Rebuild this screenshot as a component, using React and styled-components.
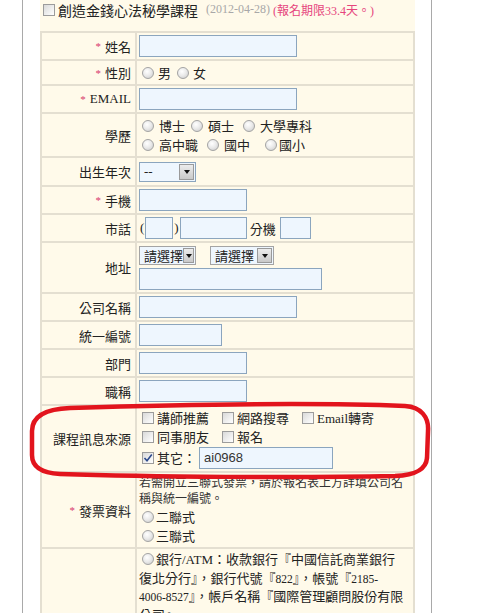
import React from "react";
import styled, { createGlobalStyle } from "styled-components";

const GlobalStyle = createGlobalStyle`
  html, body {
    margin: 0;
    padding: 0;
    background: #fff;
  }
  body {
    font-family: "Liberation Serif", "Noto Sans CJK TC", serif;
    font-size: 13px;
    color: #222;
  }
`;

const Page = styled.div`
  position: relative;
  width: 500px;
  height: 613px;
  overflow: hidden;
`;

const Panel = styled.div`
  margin-left: 22px;
  width: 375px;
  min-height: 613px;
  padding: 0 16px 0 17px;
  border-left: 1px solid #a9a9a9;
  border-right: 1px solid #a9a9a9;
`;

const TitleBar = styled.div`
  height: 31px;
  box-sizing: border-box;
  background: #fffaea;
  padding: 1px 0 0 0;
  display: flex;
  align-items: flex-start;
  white-space: nowrap;
`;

const TitleLine = styled.div`
  display: flex;
  align-items: center;
  height: 17px;
`;

const CourseName = styled.span`
  font-family: "Noto Sans CJK TC", sans-serif;
  font-size: 14px;
  color: #222;
`;

const DateText = styled.span`
  font-size: 12px;
  color: #a8a8a8;
  margin-left: 8px;
`;

const Deadline = styled.span`
  font-size: 12px;
  color: #e6457d;
  margin-left: 3px;
`;

const FormGrid = styled.div`
  display: grid;
  grid-template-columns: 93px 1fr;
  gap: 2px;
  padding: 2px;
  background: #e4dfd1;
`;

const Label = styled.div`
  background: #fffaea;
  display: flex;
  align-items: center;
  justify-content: flex-end;
  padding-right: 4px;
  font-size: 13px;
  color: #222;
  white-space: nowrap;
`;

const Req = styled.span`
  color: #d8376a;
  font-size: 11px;
  margin-right: 4px;
`;

const Value = styled.div`
  background: #fffaea;
  padding: 2px 0 2px 2px;
  display: flex;
  flex-direction: column;
  justify-content: center;
  gap: ${(p) => p.$gap || 0}px;
  min-width: 0;
`;

const Line = styled.div`
  display: flex;
  align-items: center;
  min-height: ${(p) => p.$h || 19}px;
  white-space: nowrap;
`;

const TextInput = styled.input`
  box-sizing: border-box;
  width: ${(p) => p.$w}px;
  height: 22px;
  margin: 0;
  padding: 0 4px;
  border: 1px solid #8ba5be;
  background: #eef6fe;
  font-family: "Liberation Sans", sans-serif;
  font-size: 13px;
  color: #333;
  outline: none;
`;

const Paren = styled.span`
  font-size: 13px;
  margin: 0 1px;
`;

const Option = styled.span`
  display: inline-flex;
  align-items: center;
  margin-right: ${(p) => (p.$mr == null ? 3 : p.$mr)}px;
  font-size: 13px;
  white-space: nowrap;
`;

const Radio = styled.span`
  display: inline-block;
  box-sizing: border-box;
  width: 12px;
  height: 12px;
  margin: 0 ${(p) => (p.$gap == null ? 4 : p.$gap)}px 0 3px;
  border-radius: 50%;
  border: 1px solid #a3a3a3;
  background: radial-gradient(circle at 40% 35%, #ffffff 0, #ebebeb 45%, #c9c9c9 100%);
  vertical-align: -1px;
  flex: none;
`;

const Box = styled.span`
  display: inline-flex;
  align-items: center;
  justify-content: center;
  box-sizing: border-box;
  width: 12px;
  height: 12px;
  margin: 0 3px 0 3px;
  border: 1px solid #9c9c9c;
  background: linear-gradient(135deg, #d9d9d9 0%, #f4f4f4 70%, #ffffff 100%);
  flex: none;
`;

const SourceGrid = styled.div`
  display: grid;
  grid-template-columns: 80px 80px auto;
  grid-auto-rows: 19px;
  align-items: center;
`;

const Select = styled.span`
  display: inline-flex;
  align-items: center;
  justify-content: space-between;
  box-sizing: border-box;
  width: ${(p) => p.$w}px;
  height: ${(p) => p.$h || 20}px;
  margin-right: ${(p) => p.$mr || 0}px;
  padding-left: 4px;
  border: 1px solid ${(p) => p.$border || "#8ba5be"};
  background: #eef6fe;
  font-size: 13px;
  color: #222;
`;

const SelectButton = styled.span`
  display: flex;
  align-items: center;
  justify-content: center;
  box-sizing: border-box;
  width: 15px;
  height: calc(100% - 2px);
  margin-right: 1px;
  border: 1px solid #9a9a9a;
  background: linear-gradient(#ececec, #c9c9c9);
`;

const Arrow = styled.span`
  width: 0;
  height: 0;
  border-left: 3.5px solid transparent;
  border-right: 3.5px solid transparent;
  border-top: 4px solid #111;
`;

const Note = styled.div`
  font-size: 12px;
  line-height: 16px;
  color: #333;
  white-space: normal;
`;

const BankText = styled.div`
  font-size: 13px;
  line-height: 18.5px;
  color: #222;
  white-space: nowrap;
`;

const Num = styled.span`
  font-size: 11.5px;
`;

const Overlay = styled.svg`
  position: absolute;
  left: 0;
  top: 0;
  pointer-events: none;
`;

function Check({ checked }) {
  return (
    <Box>
      {checked && (
        <svg width="10" height="10" viewBox="0 0 10 10">
          <path d="M1.5 5 L4 7.8 L8.8 1.5" fill="none" stroke="#2d4a8c" strokeWidth="1.6" />
        </svg>
      )}
    </Box>
  );
}

function Dropdown({ text, w, h, mr, border }) {
  return (
    <Select $w={w} $h={h} $mr={mr} $border={border}>
      <span>{text}</span>
      <SelectButton>
        <Arrow />
      </SelectButton>
    </Select>
  );
}

function Field({ label, required, children, gap }) {
  return (
    <>
      <Label>
        {required && <Req>*</Req>}
        {label}
      </Label>
      <Value $gap={gap}>{children}</Value>
    </>
  );
}

export default function App() {
  return (
    <Page>
      <GlobalStyle />
      <Panel>
        <TitleBar>
          <TitleLine>
            <Check />
            <CourseName>創造金錢心法秘學課程</CourseName>
            <DateText>(2012-04-28)</DateText>
            <Deadline>(報名期限33.4天。)</Deadline>
          </TitleLine>
        </TitleBar>

        <FormGrid>
          <Field label="姓名" required>
            <Line $h={22}>
              <TextInput $w={158} />
            </Line>
          </Field>

          <Field label="性別" required>
            <Line>
              <Option>
                <Radio />男
              </Option>
              <Option>
                <Radio />女
              </Option>
            </Line>
          </Field>

          <Field label="EMAIL" required>
            <Line $h={22}>
              <TextInput $w={158} />
            </Line>
          </Field>

          <Field label="學歷">
            <Line $h={19}>
              <Option>
                <Radio $gap={5} />博士
              </Option>
              <Option $mr={6}>
                <Radio $gap={5} />碩士
              </Option>
              <Option>
                <Radio $gap={5} />大學專科
              </Option>
            </Line>
            <Line $h={19}>
              <Option $mr={6}>
                <Radio $gap={5} />高中職
              </Option>
              <Option $mr={12}>
                <Radio $gap={5} />國中
              </Option>
              <Option>
                <Radio $gap={2} />國小
              </Option>
            </Line>
          </Field>

          <Field label="出生年次">
            <Line $h={23}>
              <Dropdown text="--" w={57} h={20} />
            </Line>
          </Field>

          <Field label="手機" required>
            <Line $h={22}>
              <TextInput $w={108} />
            </Line>
          </Field>

          <Field label="市話">
            <Line $h={22}>
              <Paren>(</Paren>
              <TextInput $w={28} />
              <Paren>)</Paren>
              <TextInput $w={67} />
              <Option $mr={4} style={{ marginLeft: 3 }}>
                分機
              </Option>
              <TextInput $w={31} />
            </Line>
          </Field>

          <Field label="地址" gap={2}>
            <Line $h={21}>
              <Dropdown text="請選擇" w={57} h={19} mr={14} border="#a4a4a4" />
              <Dropdown text="請選擇" w={64} h={19} border="#a4a4a4" />
            </Line>
            <Line $h={22}>
              <TextInput $w={183} />
            </Line>
          </Field>

          <Field label="公司名稱">
            <Line $h={22}>
              <TextInput $w={158} />
            </Line>
          </Field>

          <Field label="統一編號">
            <Line $h={22}>
              <TextInput $w={83} />
            </Line>
          </Field>

          <Field label="部門">
            <Line $h={22}>
              <TextInput $w={108} />
            </Line>
          </Field>

          <Field label="職稱">
            <Line $h={22}>
              <TextInput $w={108} />
            </Line>
          </Field>

          <Field label="課程訊息來源">
            <SourceGrid>
              <Option>
                <Check />講師推薦
              </Option>
              <Option>
                <Check />網路搜尋
              </Option>
              <Option>
                <Check />Email轉寄
              </Option>
              <Option>
                <Check />同事朋友
              </Option>
              <Option>
                <Check />報名
              </Option>
            </SourceGrid>
            <Line $h={23}>
              <Option>
                <Check checked />其它：
              </Option>
              <TextInput $w={134} defaultValue="ai0968" />
            </Line>
          </Field>

          <Field label="發票資料" required>
            <Note>若需開立三聯式發票，請於報名表上方詳填公司名稱與統一編號。</Note>
            <Line $h={18}>
              <Option>
                <Radio $gap={2} />二聯式
              </Option>
            </Line>
            <Line $h={18}>
              <Option>
                <Radio $gap={2} />三聯式
              </Option>
            </Line>
          </Field>

          <Field label="">
            <BankText>
              <Radio $gap={2} />
              銀行/ATM：收款銀行『中國信託商業銀行
              <br />
              復北分行』，銀行代號『<Num>822</Num>』，帳號『<Num>2185-</Num>
              <br />
              <Num>4006-8527</Num>』，帳戶名稱『國際管理顧問股份有限
              <br />
              公司』
            </BankText>
          </Field>
        </FormGrid>
      </Panel>

      <Overlay width="500" height="613" viewBox="0 0 500 613">
        <path
          d="M70 408 C200 404 330 403 405 406 C421 407 429 417 428 431 L427 458 C426 470 415 475 395 476 C300 478 150 477 60 474 C41 473 32 466 32 455 L32 431 C32 416 45 409 70 408 Z"
          fill="none"
          stroke="#e2141d"
          strokeWidth="4.5"
        />
      </Overlay>
    </Page>
  );
}
